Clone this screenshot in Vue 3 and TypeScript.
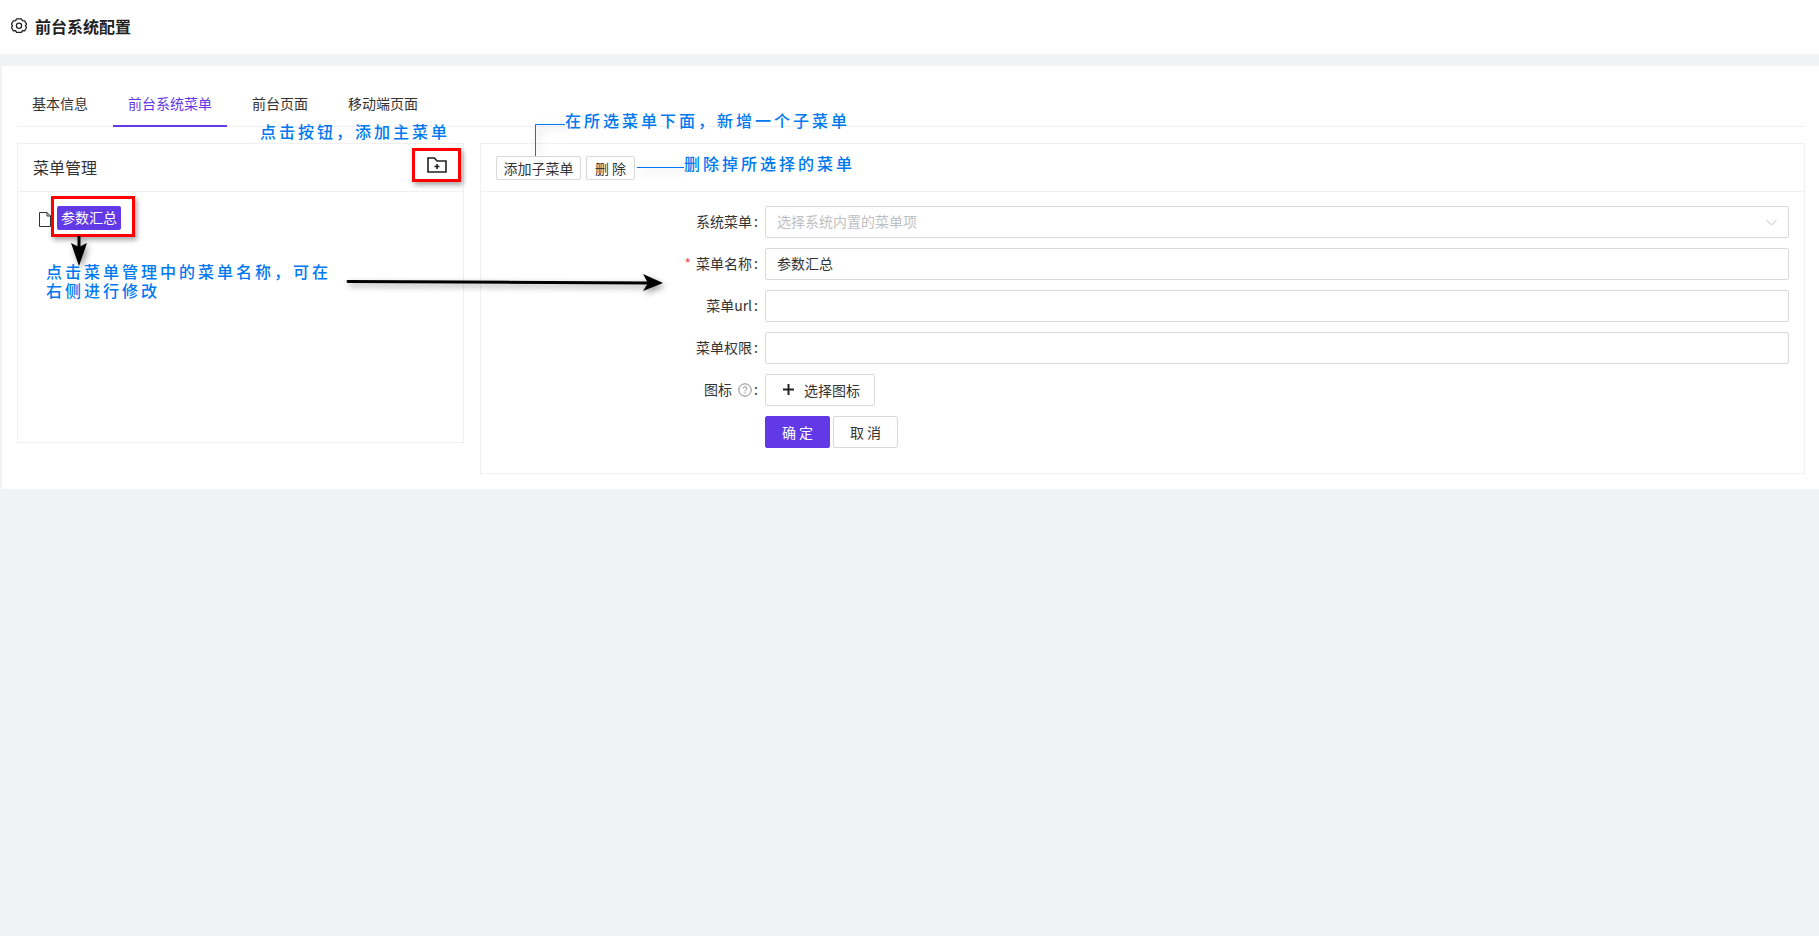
<script setup lang="ts">
interface Field { label: string; required?: boolean; value?: string; placeholder?: string; select?: boolean }
const tabs: string[] = ['基本信息', '前台系统菜单', '前台页面', '移动端页面']
const fields: Field[] = [
  { label: '系统菜单', placeholder: '选择系统内置的菜单项', select: true },
  { label: '菜单名称', required: true, value: '参数汇总' },
  { label: '菜单url' },
  { label: '菜单权限' },
]
</script>

<template>
  <div class="page">
    <header class="top">
      <svg class="gear" viewBox="0 0 16 16" fill="none" stroke="#222" stroke-width="1.3" stroke-linejoin="round">
        <path d="M5.600 1.800h4.800l1 1.900 2.200.2 2 3.400-1.200 1.700 1.200 1.700-2 3.400-2.200-.2-1 1.900H5.600l-1-1.900-2.200.2-2-3.400 1.200-1.700-1.200-1.700 2-3.400 2.200-.2z" transform="translate(0 -1) scale(1 .98)" />
        <circle cx="8" cy="7.800" r="2.600" />
      </svg>
      <h1>前台系统配置</h1>
    </header>

    <main class="card">
      <nav class="tabs">
        <span v-for="(t, i) in tabs" :key="t" class="tab" :class="{ active: i === 1 }">{{ t }}</span>
      </nav>

      <div class="panels">
        <section class="panel left">
          <div class="head">
            <span class="head-title">菜单管理</span>
            <span class="callout-box folder-box">
              <svg width="20" height="16" viewBox="0 0 20 16" fill="none" stroke="#222" stroke-width="1.600">
                <path d="M1 15V1h6.500l2.500 3h9v11z" />
                <path d="M10 7v5M7.500 9.500h5" />
              </svg>
            </span>
          </div>
          <div class="tree">
            <svg class="file" width="12" height="15" viewBox="0 0 12 15" fill="none" stroke="#333" stroke-width="1">
              <path d="M.5.500h7.500l3.500 3.500v10.500h-11zM8 .500v3.500h3.500" />
            </svg>
            <span class="callout-box tag-box"><span class="tag">参数汇总</span></span>
          </div>
        </section>

        <section class="panel right">
          <div class="head actions">
            <button class="btn small">添加子菜单</button>
            <button class="btn small narrow">删 除</button>
          </div>
          <form class="form" @submit.prevent>
            <div v-for="f in fields" :key="f.label" class="row">
              <label class="label"><i v-if="f.required" class="star">*</i>{{ f.label }}<span class="colon">:</span></label>
              <div class="input" :class="{ ph: !!f.placeholder }">
                {{ f.value || f.placeholder }}
                <svg v-if="f.select" class="chev" width="11" height="7" viewBox="0 0 11 7" fill="none" stroke="#bfbfbf" stroke-width="1">
                  <path d="M.5 1l5 5 5-5" />
                </svg>
              </div>
            </div>
            <div class="row">
              <label class="label">图标
                <svg class="help" width="14" height="14" viewBox="0 0 14 14" fill="none" stroke="#888" stroke-width="1">
                  <circle cx="7" cy="7" r="6.200" />
                  <path d="M5.200 5.500C5.200 4.400 6 3.800 7 3.800s1.800.7 1.800 1.600c0 1.300-1.800 1.400-1.800 2.900M7 9.400v1.100" />
                </svg><span class="colon">:</span></label>
              <button type="button" class="btn pick">
                <svg width="11" height="11" viewBox="0 0 11 11" stroke="#222" stroke-width="2"><path d="M5.500 0v11M0 5.500h11" /></svg>
                选择图标
              </button>
            </div>
            <div class="row">
              <span class="label"></span>
              <div class="submit">
                <button type="button" class="btn primary">确 定</button>
                <button type="button" class="btn cancel">取 消</button>
              </div>
            </div>
          </form>
        </section>
      </div>
    </main>

    <!-- screenshot annotations drawn over the page -->
    <div class="notes">
      <svg class="lines" width="1819" height="936" viewBox="0 0 1819 936" fill="none">
        <g class="shadow-blue" stroke="#0078f0" stroke-width="1">
          <path d="M535.500 156V124.500H565" />
          <path d="M637 167.500H684" />
        </g>
        <g class="shadow-black" fill="#000" stroke="#000">
          <path d="M79 236v18" stroke-width="3" />
          <path d="M71 243l8 4 8-4-8 23z" stroke="none" />
          <path d="M348 281.500l305 1.500" stroke-width="3" stroke-linecap="round" />
          <path d="M643 274l20 9-20 8 5-8z" stroke="none" />
        </g>
      </svg>
      <span class="note n1">点击按钮，添加主菜单</span>
      <span class="note n2">在所选菜单下面，新增一个子菜单</span>
      <span class="note n3">删除掉所选择的菜单</span>
      <span class="note n4">点击菜单管理中的菜单名称，可在<br />右侧进行修改</span>
    </div>
  </div>
</template>

<style scoped>
.page {
  position: relative;
  min-height: 936px;
  background: #f0f2f5;
  font-family: "Noto Sans CJK SC", "Noto Sans", sans-serif;
  font-size: 14px;
  color: #333;
  overflow: hidden;
}
.top {
  height: 54px;
  box-sizing: border-box;
  background: #fff;
  display: flex;
  align-items: center;
  padding: 0 0 3px 11px;
  gap: 8px;
}
.gear { width: 16px; height: 16px; margin-top: 1px; }
.top h1 { margin: 0; font-size: 16px; line-height: 24px; font-weight: 700; color: #222; }
.card {
  margin: 12px 0 0 2px;
  height: 423px;
  box-sizing: border-box;
  background: #fff;
  padding: 20px 14px 0 15px;
}
.tabs {
  display: flex;
  gap: 10px;
  height: 41px;
  box-sizing: border-box;
  border-bottom: 1px solid #f0f0f0;
}
.tab {
  padding: 6px 15px 0;
  line-height: 22px;
  height: 41px;
  box-sizing: border-box;
}
.tab.active { color: #6239e6; border-bottom: 2px solid #6239e6; }
.panels {
  display: grid;
  grid-template-columns: 447px 1325px;
  gap: 16px;
  align-items: start;
  margin-top: 16px;
}
.panel { border: 1px solid #f0f0f0; box-sizing: border-box; }
.left { height: 300px; }
.right { height: 331px; }
.head {
  height: 48px;
  box-sizing: border-box;
  border-bottom: 1px solid #f0f0f0;
  display: flex;
  align-items: center;
  padding: 0 15px;
}
.head-title { font-size: 16px; line-height: 24px; color: #333; margin-bottom: 2px; }
.callout-box {
  border: 3px solid #ff0000;
  box-sizing: border-box;
  display: flex;
  align-items: center;
  justify-content: center;
  box-shadow: 2px 3px 5px rgba(0, 0, 0, .35);
  background: #fff;
}
.folder-box { width: 49px; height: 34px; margin-left: auto; margin-right: -13px; margin-top: -5px; }
.tree { display: flex; align-items: center; padding: 4px 0 0 21px; }
.file { margin-top: 5px; }
.tag-box { width: 84px; height: 41px; justify-content: flex-start; padding: 3px 0 0 3px; }
.tag {
  width: 64px;
  height: 24px;
  line-height: 23px;
  border-radius: 2px;
  background: #6239e6;
  color: #fff;
  text-align: center;
}
.actions { gap: 5px; padding-top: 1px; }
.btn {
  font: inherit;
  color: #333;
  background: #fff;
  border: 1px solid #d9d9d9;
  border-radius: 2px;
  padding: 0;
  box-sizing: border-box;
  cursor: pointer;
}
.small { width: 85px; height: 24px; line-height: 20px; padding-bottom: 1px; }
.narrow { width: 49px; }
.form { padding: 14px 15px 0 0; display: flex; flex-direction: column; gap: 10px; }
.row { display: flex; gap: 7px; align-items: center; min-height: 32px; }
.label {
  width: 277px;
  flex: none;
  text-align: right;
  line-height: 22px;
  padding-bottom: 2px;
  box-sizing: border-box;
  display: flex;
  justify-content: flex-end;
  align-items: center;
  color: #333;
}
.colon { margin-left: 2px; }
.star { font-style: normal; color: #ff4d4f; margin-right: 5px; font-size: 14px; }
.help { margin: 2px 0 0 6px; }
.input {
  flex: 1;
  height: 32px;
  line-height: 28px;
  border: 1px solid #d9d9d9;
  border-radius: 2px;
  box-sizing: border-box;
  padding: 0 11px;
  position: relative;
  color: #333;
}
.input.ph { color: #bfbfbf; }
.chev { position: absolute; right: 11px; top: 12px; }
.pick {
  width: 110px;
  height: 32px;
  display: flex;
  align-items: center;
  justify-content: flex-start;
  gap: 10px;
  padding: 0 0 1px 17px;
}
.submit { display: flex; gap: 3px; }
.primary { width: 65px; height: 32px; background: #6239e6; border-color: #6239e6; color: #fff; padding-bottom: 1px; }
.cancel { width: 65px; height: 32px; padding-bottom: 1px; }

.notes { position: absolute; inset: 0; pointer-events: none; }
.lines { position: absolute; left: 0; top: 0; }
.shadow-blue { filter: drop-shadow(3px 3px 4px rgba(0, 0, 0, .3)); }
.shadow-black { filter: drop-shadow(2px 3px 3px rgba(0, 0, 0, .4)); }
.note {
  position: absolute;
  color: #0078f0;
  font-size: 16px;
  line-height: 19px;
  letter-spacing: 3px;
  white-space: nowrap;
  font-weight: 500;
}
.n1 { left: 260px; top: 122px; }
.n2 { left: 565px; top: 111px; }
.n3 { left: 684px; top: 154px; }
.n4 { left: 46px; top: 262px; }
</style>
